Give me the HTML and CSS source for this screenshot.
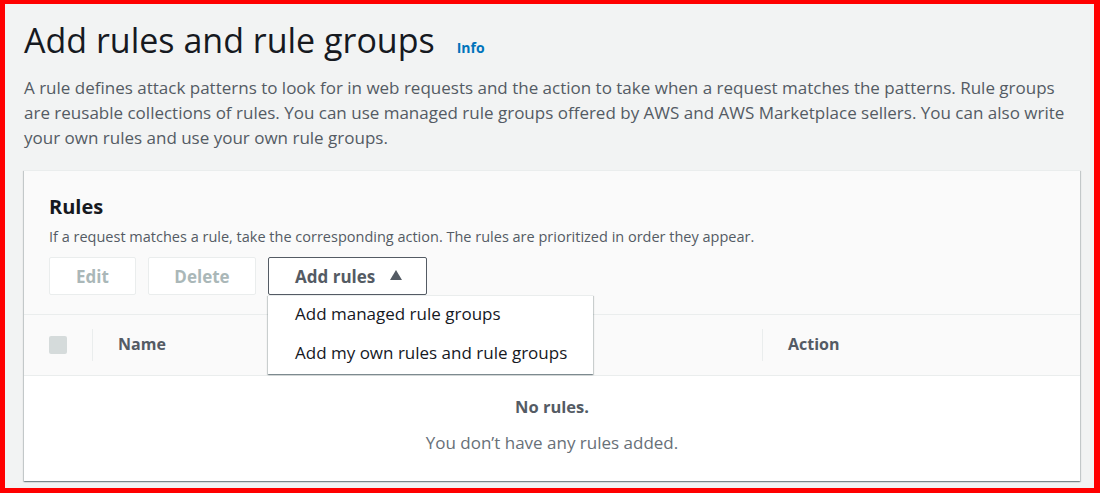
FILE: index.html
```html
<!DOCTYPE html>
<html lang="en">
<head>
<meta charset="utf-8">
<title>Add rules and rule groups</title>
<link rel="stylesheet" href="styles.css">
</head>
<body>
<div class="frame">
  <header class="page-head">
    <h1 class="title">Add rules and rule groups</h1>
    <a class="info" href="#">Info</a>
  </header>
  <p class="intro">A rule defines attack patterns to look for in web requests and the action to take when a request matches the patterns. Rule groups are reusable collections of rules. You can use managed rule groups offered by AWS and AWS Marketplace sellers. You can also write your own rules and use your own rule groups.</p>

  <section class="card">
    <div class="card-head">
      <h2 class="card-title">Rules</h2>
      <p class="card-desc">If a request matches a rule, take the corresponding action. The rules are prioritized in order they appear.</p>
      <div class="actions">
        <button class="btn btn-disabled btn-edit">Edit</button>
        <button class="btn btn-disabled btn-delete">Delete</button>
        <div class="dropdown">
          <button class="btn btn-normal btn-add">Add rules
            <svg class="caret" width="12" height="10" viewBox="0 0 12 10"><path d="M6 0 L12 10 L0 10 Z" fill="#545b64"/></svg>
          </button>
          <ul class="menu">
            <li class="menu-item">Add managed rule groups</li>
            <li class="menu-item">Add my own rules and rule groups</li>
          </ul>
        </div>
      </div>
    </div>
    <div class="table-head">
      <div class="th th-check"><span class="checkbox"></span></div>
      <div class="th th-name">Name</div>
      <div class="th th-action">Action</div>
    </div>
    <div class="empty">
      <div class="empty-title">No rules.</div>
      <div class="empty-text">You don’t have any rules added.</div>
    </div>
  </section>
</div>
</body>
</html>
```

FILE: styles.css
```css
* { box-sizing: border-box; }
html, body { margin: 0; padding: 0; }
body {
  font-family: "Open Sans", "Noto Sans", sans-serif;
  background: #f2f3f3;
  color: #16191f;
}
.frame {
  height: 493px;
  border-style: solid;
  border-color: #ff0000;
  border-width: 4px 6px 5px 5px;
  background: #f2f3f3;
  padding: 0 14px 0 19px;
  overflow: hidden;
}
.page-head {
  display: flex;
  align-items: baseline;
  gap: 22px;
  height: 71px;
  padding-top: 14px;
}
.title {
  margin: 0;
  font-size: 34px;
  font-weight: 400;
  line-height: 44px;
  color: #16191f;
}
.info {
  color: #0073bb;
  font-size: 14px;
  font-weight: 700;
  text-decoration: none;
}
.intro {
  margin: 0;
  font-size: 17px;
  line-height: 25px;
  color: #545b64;
}
.card {
  margin-top: 20px;
  background: #fafafa;
  border-top: 1px solid #eaeded;
  box-shadow: 0 1px 1px 0 rgba(0,28,36,.3), 1px 1px 1px 0 rgba(0,28,36,.15), -1px 1px 1px 0 rgba(0,28,36,.15);
}
.card-head {
  padding: 22px 25px 19px 25px;
}
.card-title {
  margin: 0;
  font-size: 20px;
  font-weight: 700;
  line-height: 28px;
  color: #16191f;
}
.card-desc {
  margin: 6px 0 0;
  font-size: 14.5px;
  line-height: 20px;
  color: #545b64;
}
.actions {
  display: flex;
  gap: 12px;
  margin-top: 10px;
}
.btn {
  font-family: inherit;
  font-size: 17px;
  font-weight: 700;
  height: 38px;
  border-radius: 2px;
  background: #ffffff;
  padding: 0 19px;
  display: inline-flex;
  align-items: center;
}
.btn-disabled {
  border: 1px solid #eaeded;
  color: #aab7b8;
}
.btn-edit { width: 87px; justify-content: center; }
.btn-delete { width: 108px; justify-content: center; }
.btn-normal {
  border: 1px solid #545b64;
  color: #545b64;
  padding: 0 24px 0 26px;
  gap: 15px;
}
.caret { display: block; margin-top: -2px; }
.dropdown { position: relative; }
.menu {
  position: absolute;
  top: 38px;
  left: 0;
  width: 325px;
  margin: 0;
  padding: 0;
  list-style: none;
  background: #ffffff;
  border-top: 1px solid #eaeded;
  box-shadow: 0 1px 1px 0 rgba(0,28,36,.3), 1px 1px 1px 0 rgba(0,28,36,.15), -1px 1px 1px 0 rgba(0,28,36,.15);
  z-index: 5;
}
.menu-item {
  font-size: 17px;
  line-height: 35px;
  padding: 0 0 4px 27px;
  color: #16191f;
}
.table-head {
  display: flex;
  align-items: center;
  height: 62px;
  background: #fafafa;
  border-top: 1px solid #eaeded;
  border-bottom: 1px solid #eaeded;
}
.th {
  font-size: 16px;
  font-weight: 700;
  color: #545b64;
  display: flex;
  align-items: center;
}
.th-check { width: 68px; padding-left: 25px; }
.checkbox {
  width: 18px;
  height: 18px;
  border-radius: 2px;
  background: #d5dbdb;
  display: block;
}
.th-name {
  width: 670px;
  height: 32px;
  border-left: 1px solid #eaeded;
  padding-left: 25px;
  padding-bottom: 2px;
}
.th-action {
  height: 32px;
  border-left: 1px solid #eaeded;
  padding-left: 25px;
  padding-bottom: 2px;
  flex: 1;
}
.empty {
  background: #ffffff;
  text-align: center;
  padding: 18px 0 25px;
}
.empty-title {
  font-size: 16.5px;
  font-weight: 700;
  color: #545b64;
  line-height: 26px;
}
.empty-text {
  margin-top: 10px;
  font-size: 17px;
  color: #687078;
  line-height: 26px;
}
```
